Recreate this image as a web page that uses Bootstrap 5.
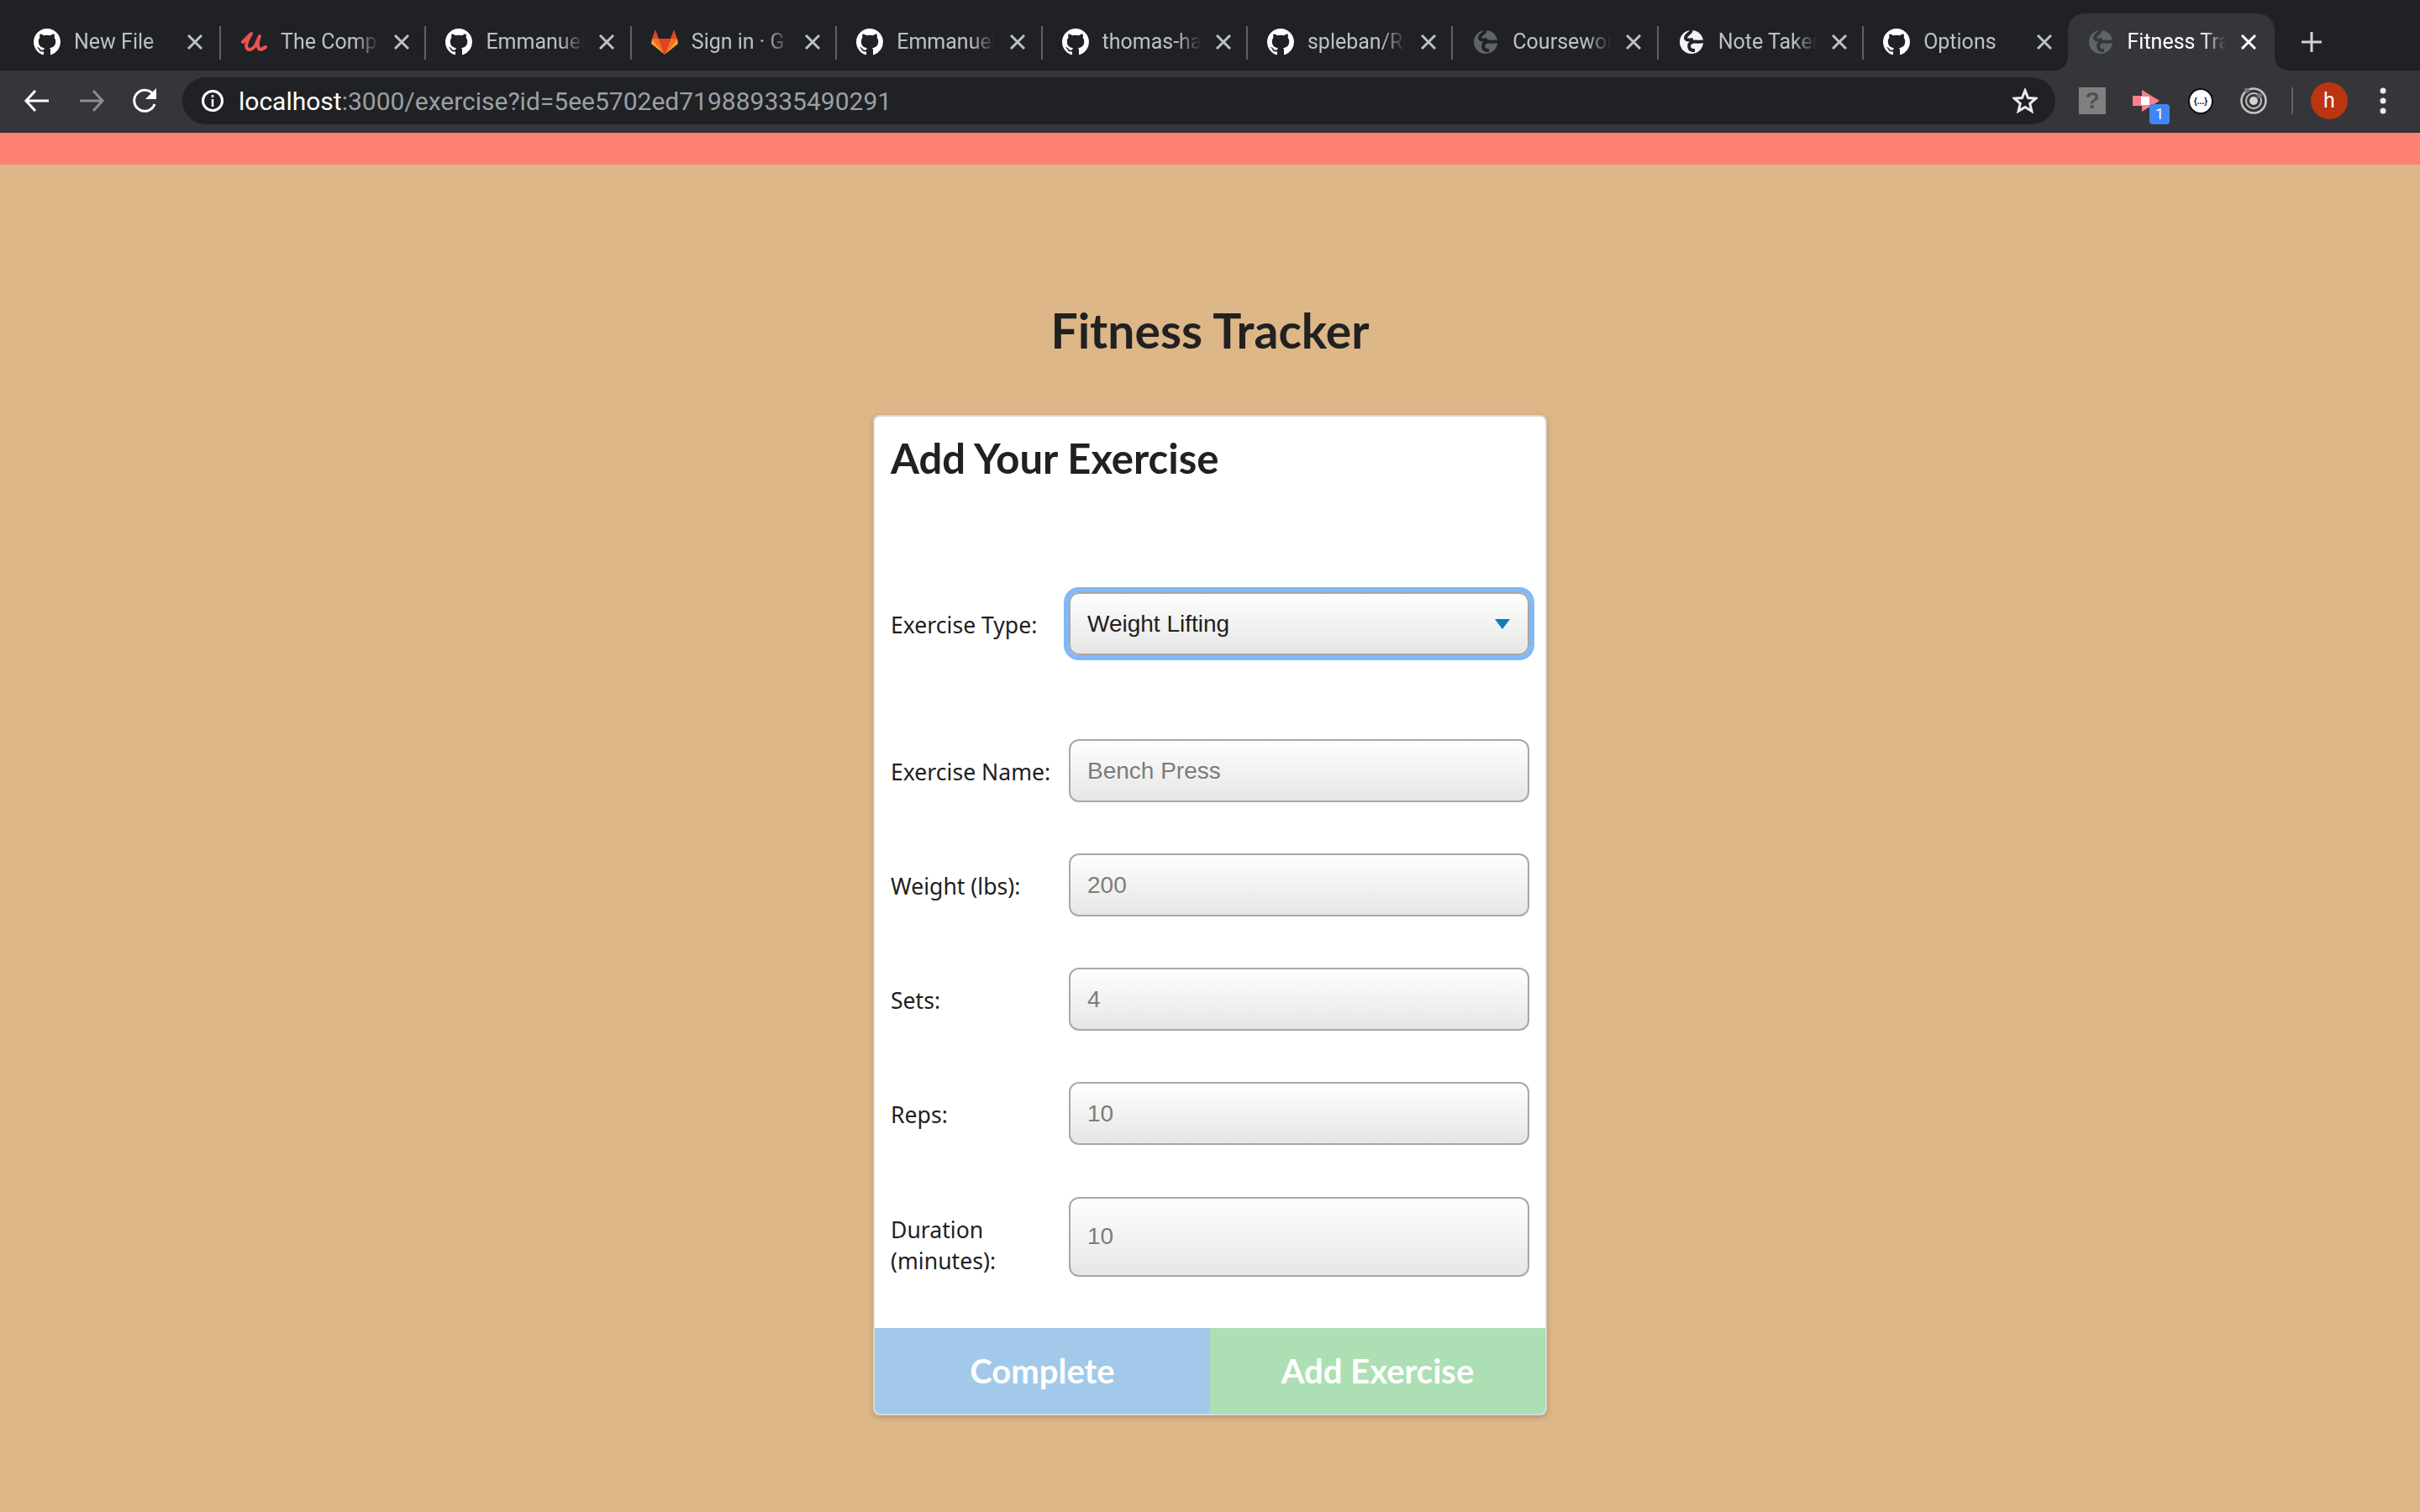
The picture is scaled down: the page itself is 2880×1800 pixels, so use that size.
<!DOCTYPE html>
<html lang="en">
<head>
    <meta charset="UTF-8">
    <title>Fitness Tracker</title>
    <link href="https://cdn.jsdelivr.net/npm/bootstrap@5.3.0/dist/css/bootstrap.min.css" rel="stylesheet">
    <style>
        html, body { height: 100%; }
        body { background: #ddb788; font-family: "Lato", sans-serif; color: #212121; display: flex; flex-direction: column; }

        /* browser chrome */
        .tab-strip { height: 84px; background: #202124; padding-left: 17px; font-family: "Roboto", sans-serif; }
        .tab-item { width: 244.4px; height: 68px; margin-top: 16px; padding-left: 23px; color: #bdc1c6; font-size: 25px; position: relative; flex: none; }
        .tab-item:first-child { width: 246px; }
        .tab-item::after { content: ""; position: absolute; right: 0; top: 15px; height: 40px; width: 2px; background: #5f6164; }
        .tab-item.no-sep::after { display: none; }
        .tab-item.active-tab { width: 246px; margin-left: -2px; background: #35363a; color: #fff; border-radius: 20px 20px 0 0; }
        .tab-item.active-tab::before, .tab-item.active-tab::after { content: ""; display: block; position: absolute; top: auto; bottom: 0; width: 16px; height: 16px; }
        .tab-item.active-tab::before { left: -16px; background: radial-gradient(circle at 0 0, transparent 15.5px, #35363a 16px); }
        .tab-item.active-tab::after { right: -16px; background: radial-gradient(circle at 100% 0, transparent 15.5px, #35363a 16px); }
        .tab-icon { width: 32px; height: 32px; flex: none; }
        .tab-title { width: 117px; margin-left: 16px; white-space: nowrap; overflow: hidden; -webkit-mask-image: linear-gradient(to right, #000 76%, transparent 100%); mask-image: linear-gradient(to right, #000 76%, transparent 100%); }
        .tab-close { width: 18px; height: 18px; margin-left: 18px; flex: none; }
        .globe-lit { color: #f1f3f4; --gap: #202124; }
        .globe-dim { color: #5f6368; --gap: #202124; }
        .active-tab .globe-dim { --gap: #35363a; }
        .new-tab { width: 24px; height: 24px; margin-left: 32px; flex: none; }
        .tool-bar { height: 74px; background: #35363a; border-bottom: 2px solid #2a2b2e; }
        .nav-glyph { flex: none; }
        .nav-back { margin-left: 26px; }
        .nav-next { margin-left: 29px; }
        .nav-reload { margin-left: 28px; }
        .url-box { width: 2229px; height: 56px; margin-left: 26px; border-radius: 28px; background: #202124; color: #9aa0a6; font-family: "Roboto", sans-serif; font-size: 30px; padding: 0 21px 0 22px; flex: none; }
        .url-box b { font-weight: 400; color: #fff; }
        .info-glyph { margin-right: 17px; }
        .ext-help { width: 32px; height: 32px; margin-left: 28px; background: #808080; color: #4f4f4f; font: 700 28px/32px "Liberation Sans", sans-serif; text-align: center; flex: none; }
        .ext-arrow { width: 32px; height: 32px; margin-left: 32px; position: relative; flex: none; }
        .ext-badge { position: absolute; left: 20px; top: 20px; width: 24px; height: 24px; border-radius: 4px; background: #4285f4; color: #fff; font: 18px/24px "Roboto", sans-serif; text-align: center; }
        .ext-json { width: 30px; height: 31px; margin-left: 34px; border-radius: 50%; background: #fff; border: 2px solid #111; color: #111; font: 700 10px/27px "Liberation Sans", sans-serif; text-align: center; white-space: nowrap; flex: none; }
        .ext-target { margin-left: 32px; flex: none; }
        .bar-divider { width: 2px; height: 32px; margin-left: 29px; background: #5f6164; flex: none; }
        .avatar-dot { width: 44px; height: 44px; margin-left: 21px; border-radius: 50%; background: #bb3510; color: #fff; font: 25px/44px "Roboto", sans-serif; text-align: center; flex: none; }
        .kebab-glyph { margin-left: 38px; flex: none; }
        .coral-bar { height: 38px; background: #fd8173; }

        /* page */
        .page-title { font-size: 57px; font-weight: 700; margin: 158px 0 0; line-height: 78px; text-align: center; }
        .exercise-card { width: 802px; margin: 62px auto 0; border: 2px solid #d8d8d8; border-radius: 8px; box-shadow: 0 2px 6px rgba(0,0,0,.22); overflow: hidden; }
        .card-heading { font-size: 49px; font-weight: 700; line-height: 60px; margin: 0; padding: 19px 19px 0; }
        .form-area { padding: 0 19px; margin-top: 130px; }
        .form-line { min-height: 75px; margin-bottom: 61px; }
        .form-line.first-line { margin-bottom: 100px; }
        .form-line.last-line { margin-bottom: 61px; min-height: 95px; }
        .field-label { width: 212px; flex: none; font: 26.6px/37px "Noto Sans", sans-serif; padding: 4px 8px 0 0; }
        .last-line .field-label { padding-top: 22px; }
        .field-input { width: 548px; height: 75px; flex: none; border: 2px solid #a8a8a8; border-radius: 12px; padding: 0 20px; font: 28px "Liberation Sans", sans-serif; color: #212121; background: linear-gradient(#fefefe, #e6e6e6); }
        .field-input::placeholder { color: #7c7c7c; opacity: 1; }
        .field-input.tall-input { height: 95px; }
        .field-select { width: 548px; height: 75px; flex: none; border: 2px solid #a8a8a8; border-radius: 12px; padding: 0 20px; font: 28px "Liberation Sans", sans-serif; color: #212121; box-shadow: 0 0 0 6px #80b8f8;
            background: url("data:image/svg+xml,%3Csvg xmlns='http://www.w3.org/2000/svg' viewBox='0 0 18 12'%3E%3Cpath fill='%230f7eb4' d='M0 0h18L9 12z'/%3E%3C/svg%3E") no-repeat right 21px center / 18px 12px, linear-gradient(#fefefe, #e6e6e6); }
        .action-btn { flex: 1; height: 102px; border: 0; border-radius: 0; color: #fff; font-size: 40px; font-weight: 700; }
        .action-blue { background: #a2c9ea; }
        .action-green { background: #acdfb3; }
    </style>
</head>
<body>
    <svg width="0" height="0" class="position-absolute">
        <symbol id="ghMark" viewBox="0 0 16 16"><path fill="#fff" d="M8 0C3.58 0 0 3.58 0 8c0 3.54 2.29 6.53 5.47 7.59.4.07.55-.17.55-.38 0-.19-.01-.82-.01-1.49-2.01.37-2.53-.49-2.69-.94-.09-.23-.48-.94-.82-1.13-.28-.15-.68-.52-.01-.53.63-.01 1.08.58 1.23.82.72 1.21 1.87.87 2.33.66.07-.52.28-.87.51-1.07-1.78-.2-3.64-.89-3.64-3.95 0-.87.31-1.59.82-2.15-.08-.2-.36-1.02.08-2.12 0 0 .67-.21 2.2.82.64-.18 1.32-.27 2-.27.68 0 1.36.09 2 .27 1.53-1.04 2.2-.82 2.2-.82.44 1.1.16 1.92.08 2.12.51.56.82 1.27.82 2.15 0 3.07-1.87 3.75-3.65 3.95.29.25.54.73.54 1.48 0 1.07-.01 1.93-.01 2.2 0 .21.15.46.55.38A8.013 8.013 0 0016 8c0-4.42-3.58-8-8-8z"/></symbol>
        <symbol id="globeMark" viewBox="0 0 32 32"><circle cx="16" cy="16" r="14" fill="currentColor"/><path fill="none" stroke="var(--gap)" stroke-width="4" d="M16 2c-1 4-7 5-7 9 0 3 5 3 9 2"/><path fill="none" stroke="var(--gap)" stroke-width="4" d="M30 15c-5 2-12-1-15 2-3 3-2 5-1 7 1 2 5 2 6 2"/></symbol>
        <symbol id="closeMark" viewBox="0 0 18 18"><path stroke="currentColor" stroke-width="3" d="M1 1l16 16M17 1L1 17"/></symbol>
    </svg>

    <div class="tab-strip d-flex align-items-start">
        <div class="tab-item d-flex align-items-center"><svg class="tab-icon"><use href="#ghMark"/></svg><span class="tab-title">New File</span><svg class="tab-close"><use href="#closeMark"/></svg></div>
        <div class="tab-item d-flex align-items-center">
            <svg class="tab-icon" viewBox="0 0 32 32"><path fill="none" stroke="#ea5252" stroke-width="4" stroke-linecap="round" stroke-linejoin="round" d="M3 16C6 13 10 9 13 6 10 11 7 16 7 21c1 6 7 5 11-1l5-11c-2 5-3 11-1 15 2 2 5 0 8-2"/></svg>
            <span class="tab-title">The Comp</span><svg class="tab-close"><use href="#closeMark"/></svg>
        </div>
        <div class="tab-item d-flex align-items-center"><svg class="tab-icon"><use href="#ghMark"/></svg><span class="tab-title">Emmanuel</span><svg class="tab-close"><use href="#closeMark"/></svg></div>
        <div class="tab-item d-flex align-items-center">
            <svg class="tab-icon" viewBox="0 0 32 32"><path fill="#e24329" d="M16 31 9 12h14z"/><path fill="#fc6d26" d="M16 31 9 12H1zM16 31l7-19h8z"/><path fill="#fca326" d="M1 12l-1 6 16 13zM31 12l1 6-16 13z"/><path fill="#e24329" d="M1 12h8L5 1zM31 12h-8l4-11z"/></svg>
            <span class="tab-title">Sign in · G</span><svg class="tab-close"><use href="#closeMark"/></svg>
        </div>
        <div class="tab-item d-flex align-items-center"><svg class="tab-icon"><use href="#ghMark"/></svg><span class="tab-title">Emmanuel</span><svg class="tab-close"><use href="#closeMark"/></svg></div>
        <div class="tab-item d-flex align-items-center"><svg class="tab-icon"><use href="#ghMark"/></svg><span class="tab-title">thomas-ha</span><svg class="tab-close"><use href="#closeMark"/></svg></div>
        <div class="tab-item d-flex align-items-center"><svg class="tab-icon"><use href="#ghMark"/></svg><span class="tab-title">spleban/Re</span><svg class="tab-close"><use href="#closeMark"/></svg></div>
        <div class="tab-item d-flex align-items-center"><svg class="tab-icon globe-dim"><use href="#globeMark"/></svg><span class="tab-title">Coursewor</span><svg class="tab-close"><use href="#closeMark"/></svg></div>
        <div class="tab-item d-flex align-items-center"><svg class="tab-icon globe-lit"><use href="#globeMark"/></svg><span class="tab-title">Note Taker</span><svg class="tab-close"><use href="#closeMark"/></svg></div>
        <div class="tab-item no-sep d-flex align-items-center"><svg class="tab-icon"><use href="#ghMark"/></svg><span class="tab-title">Options</span><svg class="tab-close"><use href="#closeMark"/></svg></div>
        <div class="tab-item active-tab d-flex align-items-center"><svg class="tab-icon globe-dim"><use href="#globeMark"/></svg><span class="tab-title">Fitness Tra</span><svg class="tab-close"><use href="#closeMark"/></svg></div>
        <svg class="new-tab align-self-center mt-3" viewBox="0 0 24 24"><path stroke="#d0d2d5" stroke-width="3" d="M12 0v24M0 12h24"/></svg>
    </div>

    <div class="tool-bar d-flex align-items-center">
        <svg class="nav-glyph nav-back" width="36" height="36" viewBox="0 0 36 36"><path fill="none" stroke="#fff" stroke-width="3" d="M32 18H6M16 6 5 18l11 12"/></svg>
        <svg class="nav-glyph nav-next" width="36" height="36" viewBox="0 0 36 36"><path fill="none" stroke="#8c8e91" stroke-width="3" d="M4 18h26M20 6l11 12-11 12"/></svg>
        <svg class="nav-glyph nav-reload" width="36" height="36" viewBox="0 0 36 36"><path fill="none" stroke="#fff" stroke-width="3" d="M29 22a12.500 12.500 0 1 1-2-12"/><path fill="#fff" d="M31 3v13H18z"/></svg>
        <div class="url-box d-flex align-items-center">
            <svg class="info-glyph" width="28" height="28" viewBox="0 0 28 28"><circle cx="14" cy="14" r="11.500" fill="none" stroke="#fff" stroke-width="3"/><path stroke="#fff" stroke-width="2.500" d="M14 12v9M14 7v3"/></svg>
            <span class="flex-grow-1"><b>localhost</b>:3000/exercise?id=5ee5702ed719889335490291</span>
            <svg width="30" height="30" viewBox="0 0 34 34"><path fill="none" stroke="#e8eaed" stroke-width="3.400" d="M17 3l4 10 10.500.8-8 6.900 2.500 10.300-9-5.500-9 5.500 2.500-10.300-8-6.900L13 13z"/></svg>
        </div>
        <div class="ext-help">?</div>
        <div class="ext-arrow">
            <svg width="32" height="32" viewBox="0 0 32 32"><path fill="#fd7f8b" d="M0 10h11V3l21 13-21 13v-7H0z"/><path fill="#fff" d="M10 11h10v10H10z"/></svg>
            <span class="ext-badge">1</span>
        </div>
        <div class="ext-json">{...}</div>
        <svg class="ext-target" width="32" height="32" viewBox="0 0 32 32"><circle cx="16" cy="16" r="14.500" fill="none" stroke="#c4c4c4" stroke-width="2.500"/><circle cx="16" cy="16" r="9" fill="none" stroke="#c4c4c4" stroke-width="2"/><circle cx="16" cy="16" r="5" fill="#d2d2d2"/><circle cx="8" cy="3.500" r="3" fill="#777"/><circle cx="23" cy="10" r="3" fill="#777"/></svg>
        <div class="bar-divider"></div>
        <div class="avatar-dot">h</div>
        <svg class="kebab-glyph" width="8" height="32" viewBox="0 0 8 32"><circle cx="4" cy="4" r="3.500" fill="#e8eaed"/><circle cx="4" cy="16" r="3.500" fill="#e8eaed"/><circle cx="4" cy="28" r="3.500" fill="#e8eaed"/></svg>
    </div>
    <div class="coral-bar"></div>

    <h1 class="page-title">Fitness Tracker</h1>
    <div class="card exercise-card">
        <h2 class="card-heading">Add Your Exercise</h2>
        <form class="form-area">
            <div class="form-line first-line d-flex align-items-center">
                <label class="field-label">Exercise Type:</label>
                <select class="field-select form-select"><option>Weight Lifting</option></select>
            </div>
            <div class="form-line d-flex align-items-center">
                <label class="field-label">Exercise Name:</label>
                <input class="field-input" placeholder="Bench Press">
            </div>
            <div class="form-line d-flex align-items-center">
                <label class="field-label">Weight (lbs):</label>
                <input class="field-input" placeholder="200">
            </div>
            <div class="form-line d-flex align-items-center">
                <label class="field-label">Sets:</label>
                <input class="field-input" placeholder="4">
            </div>
            <div class="form-line d-flex align-items-center">
                <label class="field-label">Reps:</label>
                <input class="field-input" placeholder="10">
            </div>
            <div class="form-line last-line d-flex align-items-center">
                <label class="field-label">Duration (minutes):</label>
                <input class="field-input tall-input" placeholder="10">
            </div>
        </form>
        <div class="d-flex">
            <button type="button" class="btn action-btn action-blue">Complete</button>
            <button type="button" class="btn action-btn action-green">Add Exercise</button>
        </div>
    </div>
</body>
</html>
